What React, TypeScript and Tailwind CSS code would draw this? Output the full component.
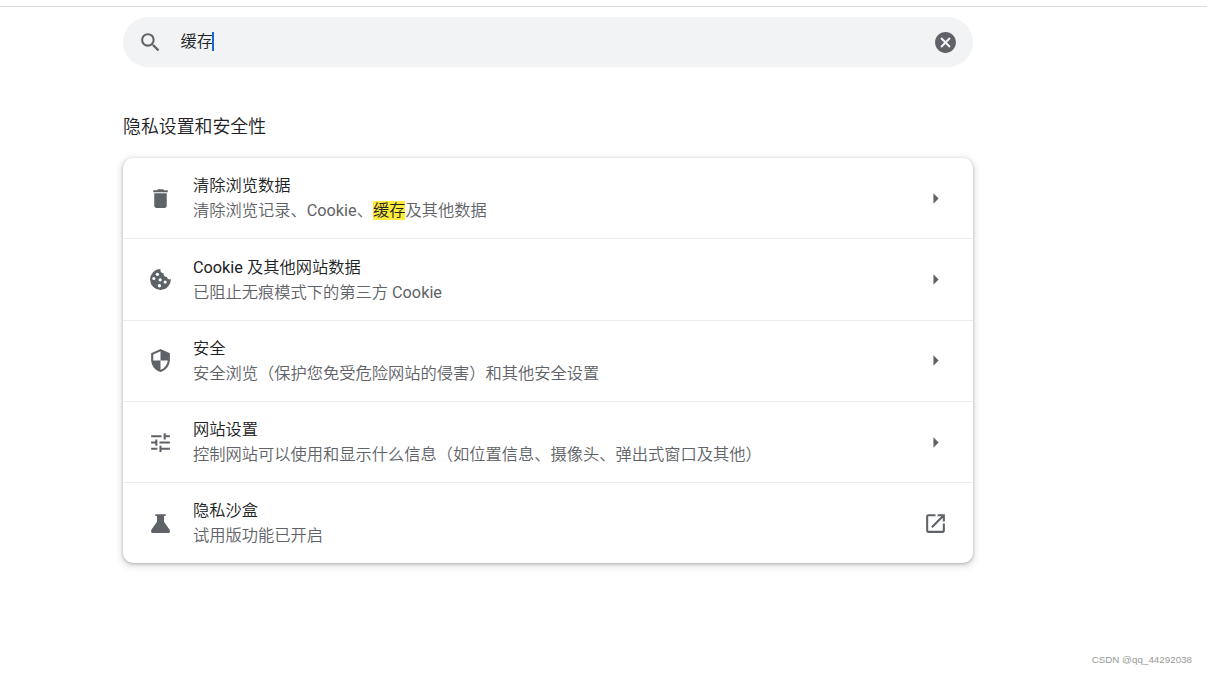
import { ReactNode } from "react";
import { MdSearch, MdCancel, MdDelete, MdSecurity, MdTune, MdOpenInNew, MdArrowRight } from "react-icons/md";

function Flask() {
  return (
    <svg width="25" height="25" viewBox="0 0 24 24" fill="currentColor">
      <path d="M7 3h10v1.7h-1.6V10.4L20.6 17.8Q21 18.4 21 19v1q0 1-1 1H4q-1 0-1-1v-1q0-.6.4-1.2L8.6 10.4V4.7H7z" />
    </svg>
  );
}

function Cookie() {
  return (
    <svg width="25" height="25" viewBox="0 0 24 24" fill="currentColor">
      <path d="M12 2a10 10 0 1 0 10 9.6 2.6 2.6 0 0 1-3.8-2.1A3 3 0 0 1 15 6a3 3 0 0 1-3-4z" />
      <g fill="white">
        <circle cx="9" cy="7" r="1.6" />
        <circle cx="5.6" cy="11" r="1.5" />
        <circle cx="11.7" cy="12.3" r="1.5" />
        <circle cx="16.5" cy="14.5" r="1.5" />
        <circle cx="11" cy="18" r="1.6" />
      </g>
    </svg>
  );
}

type Row = { icon: ReactNode; title: string; sub: ReactNode; height: string; iconTop: string; textTop: string; external?: boolean };

const rows: Row[] = [
  {
    icon: <MdDelete size={25} />,
    title: "清除浏览数据",
    sub: (
      <>
        清除浏览记录、Cookie、<span className="bg-[#ffeb3b] text-[#202124]">缓存</span>及其他数据
      </>
    ),
    height: "h-[80px]",
    iconTop: "mt-[28px]",
    textTop: "mt-[15px]",
  },
  { icon: <Cookie />, title: "Cookie 及其他网站数据", sub: "已阻止无痕模式下的第三方 Cookie", height: "h-[82px]", iconTop: "mt-[28px]", textTop: "mt-[16px]" },
  { icon: <MdSecurity size={25} />, title: "安全", sub: "安全浏览（保护您免受危险网站的侵害）和其他安全设置", height: "h-[81px]", iconTop: "mt-[27px]", textTop: "mt-[15px]" },
  { icon: <MdTune size={25} />, title: "网站设置", sub: "控制网站可以使用和显示什么信息（如位置信息、摄像头、弹出式窗口及其他）", height: "h-[81px]", iconTop: "mt-[28px]", textTop: "mt-[15px]" },
  { icon: <Flask />, title: "隐私沙盒", sub: "试用版功能已开启", height: "h-[81px]", iconTop: "mt-[28px]", textTop: "mt-[15px]", external: true },
];

export default function App() {
  return (
    <div className="flex h-[674px] flex-col overflow-hidden bg-white font-['Roboto','Noto_Sans_CJK_SC_DemiLight','Noto_Sans_CJK_SC',sans-serif] text-[#202124]">
      <div className="h-[7px] shrink-0 border-b border-[#dadce0]" />
      <main className="ml-[123px] mt-[10px] w-[850px]">
        <div className="flex h-[50px] items-center rounded-full bg-[#f1f3f4] pl-[15px] pr-[15px] text-[#5f6368]">
          <MdSearch size={25} />
          <div className="ml-[17.5px] flex flex-1 items-center text-[16.25px] text-[#202124]">
            缓存<span className="-ml-[1px] mb-px h-[19px] w-[2px] bg-[#1967d2]" />
          </div>
          <MdCancel size={25} />
        </div>
        <h2 className="mt-[47px] text-[17.9px] leading-[26px]">隐私设置和安全性</h2>
        <section className="mt-[18px] rounded-[10px] shadow-[0_1px_3px_rgba(60,64,67,0.3),0_2px_6px_2px_rgba(60,64,67,0.15)]">
          {rows.map((r) => (
            <div key={r.title} className={`${r.height} flex items-start border-t border-[#ebebeb] pl-[25px] pr-[25px] text-[#5f6368] first:border-t-0`}>
              <span className={r.iconTop}>{r.icon}</span>
              <div className={`${r.textTop} ml-[20px] flex-1 text-[16.25px] leading-[25px]`}>
                <div className="text-[#202124]">{r.title}</div>
                <div>{r.sub}</div>
              </div>
              <span className={r.iconTop}>{r.external ? <MdOpenInNew size={25} /> : <MdArrowRight size={25} />}</span>
            </div>
          ))}
        </section>
      </main>
      <footer className="mr-[15px] mt-auto pb-[7px] text-right font-['Liberation_Sans',sans-serif] text-[9.8px] leading-[14px] text-[#999]">CSDN @qq_44292038</footer>
    </div>
  );
}
